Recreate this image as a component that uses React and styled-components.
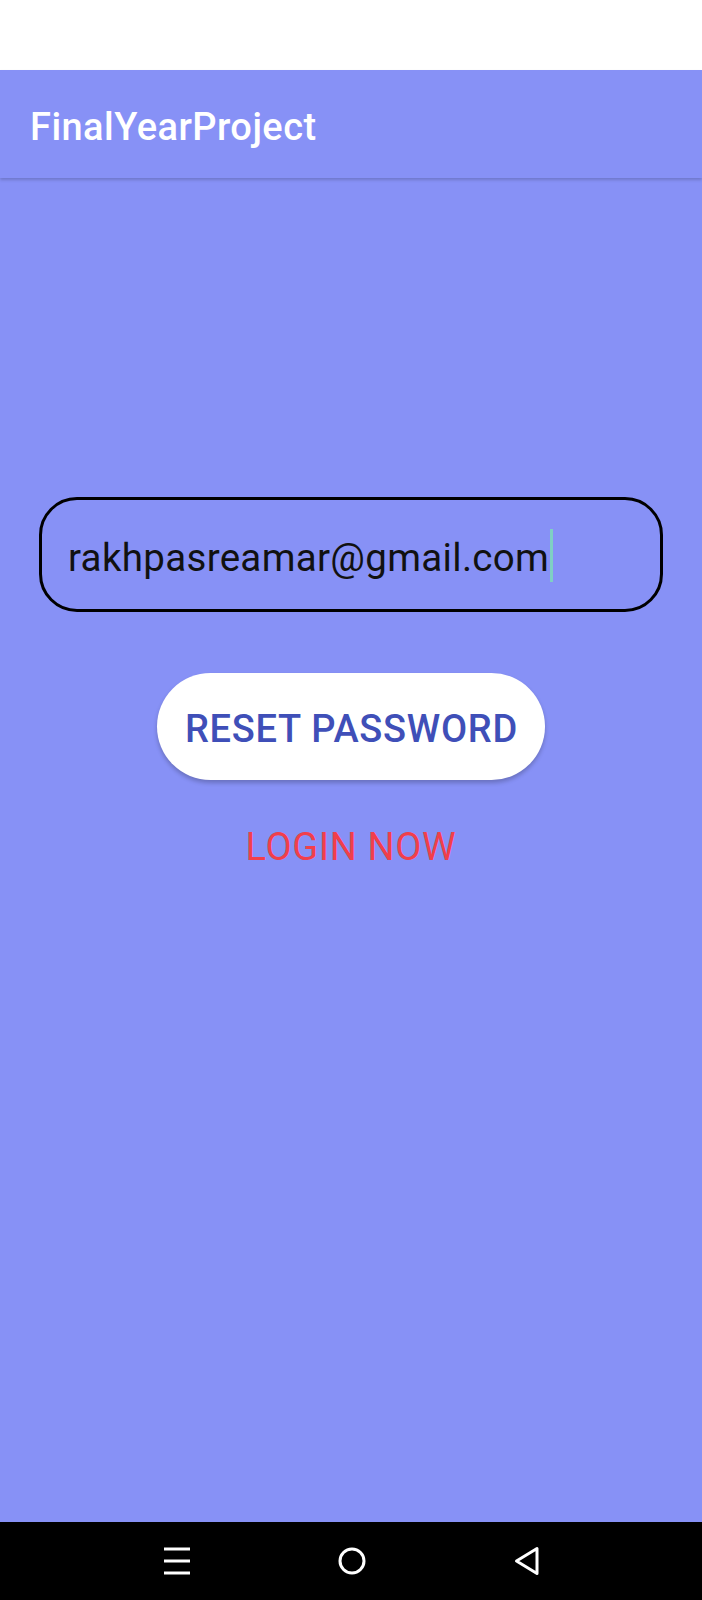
import React from "react";
import styled, { createGlobalStyle } from "styled-components";

const Global = createGlobalStyle`
  html, body { margin: 0; padding: 0; }
  body { font-family: Roboto, "Noto Sans", sans-serif; background: #ffffff; }
  * { box-sizing: border-box; }
`;

const Screen = styled.div`
  display: flex;
  flex-direction: column;
  min-height: 100vh;
  width: 100%;
  background: #8791f6;
`;

const StatusBar = styled.div`
  height: 70px;
  background: #ffffff;
`;

const AppBar = styled.header`
  height: 108px;
  display: flex;
  align-items: center;
  padding: 6px 0 0 30px;
  background: #8791f6;
  box-shadow: 0 2px 3px rgba(0, 0, 0, 0.18);
  position: relative;
  z-index: 1;
`;

const Title = styled.h1`
  margin: 0;
  font-family: Roboto, sans-serif;
  font-weight: 500;
  font-size: 38px;
  line-height: 45px;
  letter-spacing: 0.45px;
  color: #ffffff;
`;

const Content = styled.main`
  flex: 1;
  display: flex;
  flex-direction: column;
  align-items: center;
  padding: 319px 39px 0;
`;

const Field = styled.div`
  width: 100%;
  height: 115px;
  display: flex;
  align-items: center;
  padding: 5px 26px 0;
  border: 3px solid #000000;
  border-radius: 38px;
`;

const FieldText = styled.span`
  font-family: Roboto, sans-serif;
  font-size: 38.5px;
  line-height: 45px;
  letter-spacing: 0.32px;
  color: #111111;
`;

const Caret = styled.span`
  width: 3px;
  height: 53px;
  margin-left: 1px;
  margin-top: -4px;
  background: #7fcfc4;
`;

const ResetButton = styled.button`
  margin-top: 61px;
  height: 107px;
  padding: 6px 27px 0 28px;
  border: none;
  border-radius: 54px;
  background: #ffffff;
  box-shadow: 0 3px 4px rgba(0, 0, 0, 0.22);
  font-family: Roboto, sans-serif;
  font-weight: 500;
  font-size: 38px;
  line-height: 45px;
  letter-spacing: 0.72px;
  color: #3f4fb8;
  cursor: pointer;
`;

const LinkText = styled.div`
  margin-top: 45px;
  font-family: Roboto, sans-serif;
  font-size: 38px;
  line-height: 45px;
  letter-spacing: 0.65px;
  color: #f13f4b;
`;

const NavBar = styled.nav`
  height: 78px;
  background: #000000;
  display: grid;
  grid-template-columns: repeat(3, 175px);
  justify-content: center;
  align-items: center;
  padding-left: 1px;
`;

const NavSlot = styled.div`
  display: flex;
  justify-content: center;
  align-items: center;
`;

export default function App() {
  return (
    <>
      <Global />
      <Screen>
        <StatusBar />
        <AppBar>
          <Title>FinalYearProject</Title>
        </AppBar>
        <Content>
          <Field>
            <FieldText>rakhpasreamar@gmail.com</FieldText>
            <Caret />
          </Field>
          <ResetButton>RESET PASSWORD</ResetButton>
          <LinkText>LOGIN NOW</LinkText>
        </Content>
        <NavBar>
          <NavSlot>
            <svg width="26" height="28" viewBox="0 0 26 28">
              <g stroke="#fff" strokeWidth="3">
                <line x1="0" y1="2" x2="26" y2="2" />
                <line x1="0" y1="14" x2="26" y2="14" />
                <line x1="0" y1="26" x2="26" y2="26" />
              </g>
            </svg>
          </NavSlot>
          <NavSlot>
            <svg width="28" height="28" viewBox="0 0 28 28">
              <circle cx="14" cy="14" r="12" fill="none" stroke="#fff" strokeWidth="3" />
            </svg>
          </NavSlot>
          <NavSlot>
            <svg width="26" height="30" viewBox="0 0 26 30">
              <path
                d="M23 2.5 L23 27.5 L2.5 15 Z"
                fill="none"
                stroke="#fff"
                strokeWidth="3"
                strokeLinejoin="round"
              />
            </svg>
          </NavSlot>
        </NavBar>
      </Screen>
    </>
  );
}
